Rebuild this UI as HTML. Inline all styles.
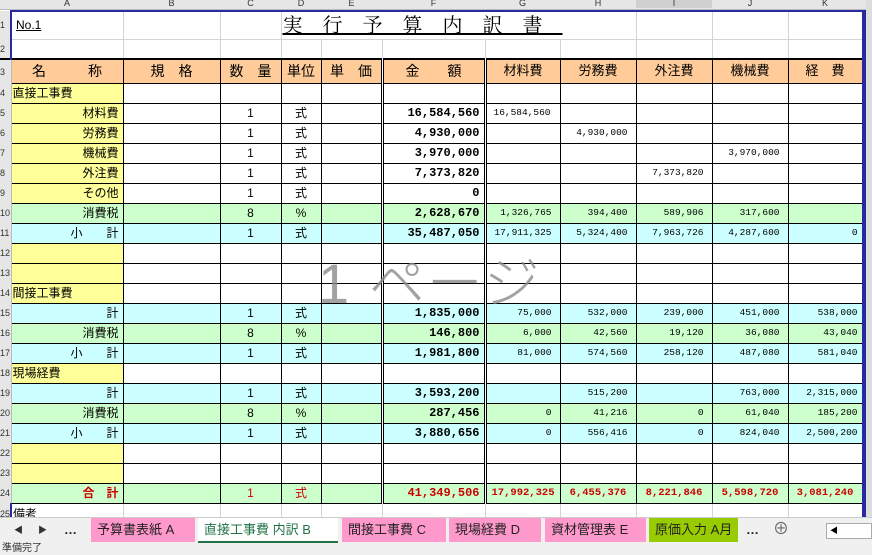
<!DOCTYPE html>
<html><head><meta charset="utf-8"><style>
*{margin:0;padding:0;box-sizing:border-box}
body{width:872px;height:555px;overflow:hidden;background:#fff;position:relative;font-family:"Liberation Sans","Noto Sans CJK JP",sans-serif;font-size:12px}
#colh{position:absolute;left:0;top:0;width:872px;height:10px;background:#e6e6e6;border-bottom:1px solid #bbb;font-size:9px;color:#333;overflow:hidden}
#colh span{position:absolute;top:-2px;text-align:center}
table{position:absolute;left:0;top:10px;border-collapse:collapse;table-layout:fixed;width:862px}
td{border:1px solid #000;padding:0 4px;white-space:nowrap;overflow:hidden;height:20px;font-size:12px;line-height:18px}
td.rh{background:#e6e6e6;border:none;border-right:1px solid #bbb;font-size:9px;color:#333;padding:0;text-align:left}
tr.g td{border-color:#d4d4d4}
tr.g td.rh{border-color:#bbb}
.y{background:#ffff99}.gr{background:#ccffcc}.c{background:#ccffff}.o{background:#ffcc99}
.r{text-align:right}.ce{text-align:center}
.f{font-family:"Liberation Mono",monospace;font-weight:bold;text-align:right;font-size:12px}
.s{font-family:"Liberation Mono",monospace;font-size:9.5px;text-align:right;padding-right:8px}
.dl{border-left:3px double #000}
.red{color:#cc0000;font-weight:bold}
.rs{font-family:"Liberation Mono",monospace;font-weight:bold;font-size:10.5px;text-align:center;padding:0}
#wm{position:absolute;left:318px;top:252px;font-size:56px;line-height:64px;color:#8c8c8c;letter-spacing:2px;font-weight:300;opacity:.8;white-space:nowrap}
#rb{position:absolute;left:862px;top:10px;width:4px;height:507px;background:#2a2aa0}
#rg{position:absolute;left:866px;top:0;width:6px;height:517px;background:#ddd}
#tabs{position:absolute;left:0;top:517px;width:872px;height:26px;background:#f0f0f0;border-top:1px solid #ccc;overflow:hidden}
.tab{position:absolute;top:0;height:24px;line-height:24px;font-size:13px;padding:0 6px;color:#222;white-space:nowrap;overflow:hidden}
#status{position:absolute;left:0;top:543px;width:872px;height:12px;background:#f0f0f0;font-size:10px;line-height:12px;color:#333;padding-left:2px}
</style></head><body>
<div id="colh">
<span style="left:11px;width:112px">A</span><span style="left:123px;width:97px">B</span><span style="left:220px;width:61px">C</span><span style="left:281px;width:40px">D</span><span style="left:321px;width:61px">E</span><span style="left:382px;width:103px">F</span><span style="left:485px;width:75px">G</span><span style="left:560px;width:76px">H</span><span style="left:636px;width:76px;background:#d0d0d0">I</span><span style="left:712px;width:76px">J</span><span style="left:788px;width:74px">K</span>
</div>
<table>
<colgroup><col style="width:11px"><col style="width:112px"><col style="width:97px"><col style="width:61px"><col style="width:40px"><col style="width:61px"><col style="width:103px"><col style="width:75px"><col style="width:76px"><col style="width:76px"><col style="width:76px"><col style="width:74px"></colgroup>
<tr class="g"><td class="rh" style="height:28px">1</td><td style="height:28px;border-top:2px solid #2a2aa0;border-left:2px solid #2a2aa0"><u>No.1</u></td><td style="border-top:2px solid #2a2aa0"></td><td style="border-top:2px solid #2a2aa0"></td><td colspan="5" style="border-top:2px solid #2a2aa0;overflow:visible;position:relative"><span style="position:absolute;left:1px;top:2px;font-size:20px;letter-spacing:20px;text-decoration:underline;line-height:24px;font-family:'Liberation Serif','Noto Serif CJK SC',serif">実行予算内訳書</span></td><td style="border-top:2px solid #2a2aa0"></td><td style="border-top:2px solid #2a2aa0"></td><td style="border-top:2px solid #2a2aa0"></td></tr>
<tr class="g"><td class="rh" style="height:17px">2</td><td style="height:17px;border-left:2px solid #2a2aa0"></td><td></td><td></td><td></td><td></td><td></td><td></td><td></td><td></td><td></td><td></td></tr>
<tr style="border-top:2px solid #000"><td class="rh" style="height:24px">3</td><td class="o ce" style="height:24px;font-size:14px">名　　　称</td><td class="o ce" style="font-size:14px">規　格</td><td class="o ce" style="font-size:14px">数　量</td><td class="o ce" style="font-size:14px">単位</td><td class="o ce" style="font-size:14px">単　価</td><td class="o ce dl" style="font-size:14px">金　　額</td><td class="o ce dl" style="font-size:13px">材料費</td><td class="o ce" style="font-size:13px">労務費</td><td class="o ce" style="font-size:13px">外注費</td><td class="o ce" style="font-size:13px">機械費</td><td class="o ce" style="font-size:13px">経　費</td></tr>
<tr><td class="rh">4</td><td class="y" style="padding:0 1px">直接工事費</td><td></td><td></td><td></td><td></td><td class="dl"></td><td class="dl"></td><td></td><td></td><td></td><td></td></tr>
<tr><td class="rh">5</td><td class="y r">材料費</td><td></td><td class="ce">1</td><td class="ce">式</td><td></td><td class="f dl">16,584,560</td><td class="s dl" style="text-align:left;padding-left:7px">16,584,560</td><td></td><td></td><td></td><td></td></tr>
<tr><td class="rh">6</td><td class="y r">労務費</td><td></td><td class="ce">1</td><td class="ce">式</td><td></td><td class="f dl">4,930,000</td><td class="dl"></td><td class="s">4,930,000</td><td></td><td></td><td></td></tr>
<tr><td class="rh">7</td><td class="y r">機械費</td><td></td><td class="ce">1</td><td class="ce">式</td><td></td><td class="f dl">3,970,000</td><td class="dl"></td><td></td><td></td><td class="s">3,970,000</td><td></td></tr>
<tr><td class="rh">8</td><td class="y r">外注費</td><td></td><td class="ce">1</td><td class="ce">式</td><td></td><td class="f dl">7,373,820</td><td class="dl"></td><td></td><td class="s">7,373,820</td><td></td><td></td></tr>
<tr><td class="rh">9</td><td class="y r">その他</td><td></td><td class="ce">1</td><td class="ce">式</td><td></td><td class="f dl">0</td><td class="dl"></td><td></td><td></td><td></td><td></td></tr>
<tr class="gr"><td class="rh">10</td><td class="r">消費税</td><td></td><td class="ce">8</td><td class="ce">%</td><td></td><td class="f dl">2,628,670</td><td class="s dl">1,326,765</td><td class="s">394,400</td><td class="s">589,906</td><td class="s">317,600</td><td></td></tr>
<tr class="c"><td class="rh">11</td><td class="r">小　　計</td><td></td><td class="ce">1</td><td class="ce">式</td><td></td><td class="f dl">35,487,050</td><td class="s dl">17,911,325</td><td class="s">5,324,400</td><td class="s">7,963,726</td><td class="s">4,287,600</td><td class="s" style="padding-right:4px">0</td></tr>
<tr><td class="rh">12</td><td class="y"></td><td></td><td></td><td></td><td></td><td class="dl"></td><td class="dl"></td><td></td><td></td><td></td><td></td></tr>
<tr><td class="rh">13</td><td class="y"></td><td></td><td></td><td></td><td></td><td class="dl"></td><td class="dl"></td><td></td><td></td><td></td><td></td></tr>
<tr><td class="rh">14</td><td class="y" style="padding:0 1px">間接工事費</td><td></td><td></td><td></td><td></td><td class="dl"></td><td class="dl"></td><td></td><td></td><td></td><td></td></tr>
<tr class="c"><td class="rh">15</td><td class="r">計</td><td></td><td class="ce">1</td><td class="ce">式</td><td></td><td class="f dl">1,835,000</td><td class="s dl">75,000</td><td class="s">532,000</td><td class="s">239,000</td><td class="s">451,000</td><td class="s" style="padding-right:4px">538,000</td></tr>
<tr class="gr"><td class="rh">16</td><td class="r">消費税</td><td></td><td class="ce">8</td><td class="ce">%</td><td></td><td class="f dl">146,800</td><td class="s dl">6,000</td><td class="s">42,560</td><td class="s">19,120</td><td class="s">36,080</td><td class="s" style="padding-right:4px">43,040</td></tr>
<tr class="c"><td class="rh">17</td><td class="r">小　　計</td><td></td><td class="ce">1</td><td class="ce">式</td><td></td><td class="f dl">1,981,800</td><td class="s dl">81,000</td><td class="s">574,560</td><td class="s">258,120</td><td class="s">487,080</td><td class="s" style="padding-right:4px">581,040</td></tr>
<tr><td class="rh">18</td><td class="y" style="padding:0 1px">現場経費</td><td></td><td></td><td></td><td></td><td class="dl"></td><td class="dl"></td><td></td><td></td><td></td><td></td></tr>
<tr class="c"><td class="rh">19</td><td class="r">計</td><td></td><td class="ce">1</td><td class="ce">式</td><td></td><td class="f dl">3,593,200</td><td class="s dl"></td><td class="s">515,200</td><td class="s"></td><td class="s">763,000</td><td class="s" style="padding-right:4px">2,315,000</td></tr>
<tr class="gr"><td class="rh">20</td><td class="r">消費税</td><td></td><td class="ce">8</td><td class="ce">%</td><td></td><td class="f dl">287,456</td><td class="s dl">0</td><td class="s">41,216</td><td class="s">0</td><td class="s">61,040</td><td class="s" style="padding-right:4px">185,200</td></tr>
<tr class="c"><td class="rh">21</td><td class="r">小　　計</td><td></td><td class="ce">1</td><td class="ce">式</td><td></td><td class="f dl">3,880,656</td><td class="s dl">0</td><td class="s">556,416</td><td class="s">0</td><td class="s">824,040</td><td class="s" style="padding-right:4px">2,500,200</td></tr>
<tr><td class="rh">22</td><td class="y"></td><td></td><td></td><td></td><td></td><td class="dl"></td><td class="dl"></td><td></td><td></td><td></td><td></td></tr>
<tr><td class="rh">23</td><td class="y"></td><td></td><td></td><td></td><td></td><td class="dl"></td><td class="dl"></td><td></td><td></td><td></td><td></td></tr>
<tr class="gr"><td class="rh">24</td><td class="r red" style="padding-right:4px">合　計</td><td></td><td class="ce" style="color:#cc0000">1</td><td class="ce" style="color:#cc0000">式</td><td></td><td class="f dl red">41,349,506</td><td class="rs dl red">17,992,325</td><td class="rs red">6,455,376</td><td class="rs red">8,221,846</td><td class="rs red">5,598,720</td><td class="rs red">3,081,240</td></tr>
<tr class="g"><td class="rh" style="height:14px">25</td><td style="height:14px;border-left:2px solid #2a2aa0;padding:0 1px;line-height:20px">備考</td><td></td><td></td><td></td><td></td><td></td><td></td><td></td><td></td><td></td><td></td></tr>
</table>
<div id="wm">1 ページ</div>
<div id="rb"></div><div id="rg"></div>
<div id="tabs">
<span class="tab" style="left:8px;color:#333;font-size:9px">◀</span><span class="tab" style="left:32px;color:#333;font-size:9px">▶</span><span class="tab" style="left:58px;font-weight:bold">…</span>
<div class="tab" style="left:91px;width:104px;background:#ff99cc">予算書表紙 A</div>
<div class="tab" style="left:198px;width:140px;background:#fff;color:#217346;border-bottom:2px solid #217346;height:25px">直接工事費 内訳 B</div>
<div class="tab" style="left:342px;width:104px;background:#ff99cc">間接工事費 C</div>
<div class="tab" style="left:449px;width:92px;background:#ff99cc">現場経費 D</div>
<div class="tab" style="left:545px;width:101px;background:#ff99cc">資材管理表 E</div>
<div class="tab" style="left:649px;width:89px;background:#99cc00">原価入力 A月</div>
<span class="tab" style="left:740px;font-weight:bold">…</span>
<span class="tab" style="left:767px;color:#666;font-size:16px">⊕</span>
<div style="position:absolute;left:826px;top:5px;width:46px;height:16px;background:#fff;border:1px solid #aaa;font-size:8px;line-height:14px;padding-left:3px">◀</div>
</div>
<div id="status">準備完了</div>
</body></html>
